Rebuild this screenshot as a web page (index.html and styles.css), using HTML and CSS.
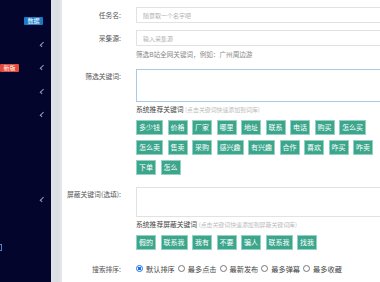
FILE: index.html
```html
<!DOCTYPE html>
<html lang="zh-CN">
<head>
<meta charset="UTF-8">
<meta name="viewport" content="width=device-width, initial-scale=1.0">
<title>新建采集任务</title>
<link rel="stylesheet" href="styles.css">
</head>
<body>

<div class="app">
    <aside class="sidebar">
        <div class="nav-item first"><span></span><span class="badge blue">数据</span></div>
        <div class="nav-item"><span></span><i class="chev"></i></div>
        <div class="nav-item"><span class="badge red">新版</span><i class="chev"></i></div>
        <div class="nav-item"><span></span><i class="chev"></i></div>
        <div class="nav-item"><span></span><i class="chev"></i></div>
        <div class="nav-item gap"><span></span><i class="chev"></i></div>
        <div class="nav-box"></div>
    </aside>
    <div class="scroll-strip"></div>

    <main class="main">
        <div class="form-row">
            <label class="form-label line">任务名:</label>
            <div class="field">
                <input class="input" type="text" placeholder="随意取一个名字吧">
            </div>
        </div>

        <div class="form-row row-source">
            <label class="form-label line">采集源:</label>
            <div class="field">
                <input class="input" type="text" placeholder="输入采集源">
                <div class="hint">筛选B站全网关键词，例如：广州周边游</div>
            </div>
        </div>

        <div class="form-row row-keywords">
            <label class="form-label top">筛选关键词:</label>
            <div class="field">
                <textarea class="textarea focus tall"></textarea>
                <div class="note">系统推荐关键词 <small>(点击关键词快速添加到词库)</small></div>
                <div class="tags">
                    <span class="tag">多少钱</span>
                    <span class="tag">价格</span>
                    <span class="tag">厂家</span>
                    <span class="tag">哪里</span>
                    <span class="tag">地址</span>
                    <span class="tag">联系</span>
                    <span class="tag">电话</span>
                    <span class="tag">购买</span>
                    <span class="tag">怎么买</span>
                    <span class="tag">怎么卖</span>
                    <span class="tag">售卖</span>
                    <span class="tag">采购</span>
                    <span class="tag">感兴趣</span>
                    <span class="tag">有兴趣</span>
                    <span class="tag">合作</span>
                    <span class="tag">喜欢</span>
                    <span class="tag">咋买</span>
                    <span class="tag">咋卖</span>
                    <span class="tag">下单</span>
                    <span class="tag">怎么</span>
                </div>
            </div>
        </div>

        <div class="form-row row-block">
            <label class="form-label top">屏蔽关键词(选填):</label>
            <div class="field">
                <textarea class="textarea"></textarea>
                <div class="note">系统推荐屏蔽关键词 <small>(点击关键词快速添加到屏蔽关键词库)</small></div>
                <div class="tags">
                    <span class="tag">假的</span>
                    <span class="tag">联系我</span>
                    <span class="tag">我有</span>
                    <span class="tag">不要</span>
                    <span class="tag">骗人</span>
                    <span class="tag">联系我</span>
                    <span class="tag">找我</span>
                </div>
            </div>
        </div>

        <div class="form-row row-sort">
            <label class="form-label">搜索排序:</label>
            <div class="field radios">
                <label class="radio"><input type="radio" name="sort" checked> 默认排序</label>
                <label class="radio"><input type="radio" name="sort"> 最多点击</label>
                <label class="radio"><input type="radio" name="sort"> 最新发布</label>
                <label class="radio"><input type="radio" name="sort"> 最多弹幕</label>
                <label class="radio"><input type="radio" name="sort"> 最多收藏</label>
            </div>
        </div>
    </main>
</div>

</body>
</html>
```

FILE: styles.css
```css
* {
    box-sizing: border-box;
}
body {
    margin: 0;
    overflow: hidden;
    font-family: "Noto Sans CJK SC", "Noto Sans", sans-serif;
    color: #333;
    background: #fff;
}
.app {
    display: flex;
    height: 282px;
}

/* sidebar */
.sidebar {
    width: 51px;
    flex-shrink: 0;
    background: #03052d;
    display: flex;
    flex-direction: column;
    padding-top: 9px;
}
.nav-item {
    height: 23.5px;
    display: flex;
    justify-content: space-between;
    align-items: center;
    padding-right: 7px;
}
.nav-item.first {
    padding-right: 8px;
}
.nav-item.gap {
    margin-top: 61px;
}
.badge {
    font-size: 6px;
    line-height: 8px;
    padding: 0 2px;
    color: #fff;
    border-radius: 1px;
}
.badge.blue {
    background: #1d7bc6;
    width: 19px;
    text-align: center;
}
.badge.red {
    background: #e24a3b;
    width: 19px;
    text-align: center;
}
.chev {
    width: 3px;
    height: 5px;
    border-left: 1px solid #8e9bb9;
    border-bottom: 1px solid #8e9bb9;
    transform: rotate(45deg);
}
.nav-box {
    width: 6px;
    height: 7px;
    margin: 33px 0 0 -4px;
    border: 1px solid #5c82c0;
}
.scroll-strip {
    width: 11px;
    flex-shrink: 0;
    background: linear-gradient(to right, #dfe2e5, #d9dce0 60%, #e6e8ea);
}

/* form */
.main {
    flex: 1;
    min-width: 0;
    overflow: hidden;
    padding-top: 7px;
}
.form-row {
    display: grid;
    grid-template-columns: 59px 1fr;
    column-gap: 15px;
    align-items: start;
}
.form-label {
    text-align: right;
    font-size: 6.8px;
    line-height: 8px;
    color: #555;
    white-space: nowrap;
}
.form-label.line {
    line-height: 16px;
}
.form-label.top {
    padding-top: 3px;
}
.field {
    min-width: 0;
}
.row-source {
    margin-top: 7px;
}
.row-keywords {
    margin-top: 11px;
}
.row-block {
    margin-top: 12px;
}
.row-sort {
    margin-top: 14px;
    align-items: center;
}
.input,
.textarea {
    display: block;
    width: 300px;
    border: 1px solid #e2e2e2;
    font-family: inherit;
    font-size: 6px;
    padding: 0 6px;
    outline: none;
    resize: none;
}
.input {
    height: 16px;
}
.input::placeholder {
    color: #b0b0b0;
}
.textarea {
    height: 30px;
}
.textarea.tall {
    height: 33px;
}
.textarea.focus {
    border-color: #a9c9e7;
}
.hint {
    margin-top: 4px;
    font-size: 6.6px;
    line-height: 8px;
    color: #888;
}
.note {
    margin-top: 2.5px;
    font-size: 6.8px;
    line-height: 8px;
    color: #444;
    white-space: nowrap;
}
.row-block .note {
    margin-top: 3px;
}
.note small {
    font-size: 5.9px;
    color: #bbb;
}
.tags {
    display: flex;
    flex-wrap: wrap;
    gap: 5px 4.5px;
    width: 240px;
    margin-top: 6px;
}
.tag {
    font-size: 7px;
    line-height: 13px;
    padding: 0 2px;
    color: #fff;
    background: #3ca68c;
    border: 1px solid #96d2c1;
    cursor: pointer;
}
.tag:hover {
    background: #2f9279;
}

/* radios */
.radios {
    display: flex;
    align-items: center;
}
.radio {
    display: flex;
    align-items: center;
    font-size: 7.2px;
    line-height: 10px;
    color: #444;
    margin-right: 3px;
    white-space: nowrap;
}
.radio input {
    appearance: none;
    width: 7px;
    height: 7px;
    margin: 0 3px 0 0;
    border: 1px solid #777;
    border-radius: 50%;
    background: #fff;
}
.radio input:checked {
    border-color: #1a73e8;
    background: radial-gradient(circle, #1a73e8 45%, #fff 50%);
}
```
